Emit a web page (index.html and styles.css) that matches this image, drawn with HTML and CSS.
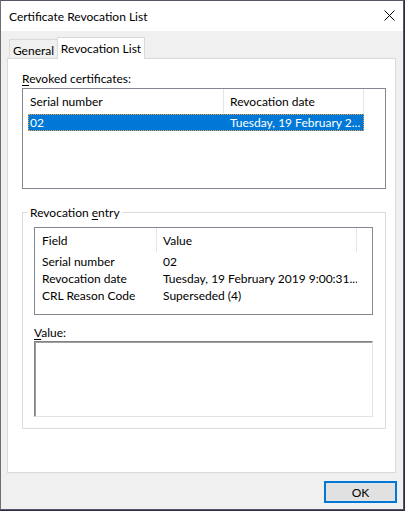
FILE: index.html
```html
<!DOCTYPE html>
<html>
<head>
<meta charset="utf-8">
<title>Certificate Revocation List</title>
<link rel="stylesheet" href="styles.css">
</head>
<body>
<div class="window">
  <div class="titlebar">
    <span class="title">Certificate Revocation List</span>
    <svg class="close" width="11" height="11" viewBox="0 0 11 11"><path d="M0.5 0.5 L10.5 10.5 M10.5 0.5 L0.5 10.5" stroke="#000" stroke-width="1" fill="none"/></svg>
  </div>
  <div class="client">
    <div class="tabs">
      <div class="tab tab-general">General</div>
      <div class="tab tab-active">Revocation List</div>
    </div>
    <div class="panel">
      <div class="label"><u>R</u>evoked certificates:</div>
      <div class="list list-revoked">
        <div class="header">
          <div class="hcell c1">Serial number</div>
          <div class="hcell c2">Revocation date</div>
        </div>
        <div class="row selected">
          <div class="cell r1">02</div>
          <div class="cell r2">Tuesday, 19 February 2...</div>
        </div>
      </div>
      <fieldset class="group">
        <legend>Revocation <u>e</u>ntry</legend>
        <div class="list list-entry">
          <div class="header">
            <div class="hcell e1">Field</div>
            <div class="hcell e2">Value</div>
          </div>
          <div class="row">
            <div class="cell e1">Serial number</div>
            <div class="cell e2">02</div>
          </div>
          <div class="row">
            <div class="cell e1">Revocation date</div>
            <div class="cell e2">Tuesday, 19 February 2019 9:00:31...</div>
          </div>
          <div class="row">
            <div class="cell e1">CRL Reason Code</div>
            <div class="cell e2">Superseded (4)</div>
          </div>
        </div>
        <div class="label value-label"><u>V</u>alue:</div>
        <div class="textbox"></div>
      </fieldset>
    </div>
    <div class="buttons">
      <div class="button">OK</div>
    </div>
  </div>
</div>
</body>
</html>
```
FILE: styles.css
```css
* { box-sizing: border-box; }
html, body { margin: 0; padding: 0; }
body {
  width: 405px;
  height: 511px;
  background: #2e2d40;
  font-family: "Lato", "Noto Sans", sans-serif;
  font-size: 12px;
  color: #000;
  overflow: hidden;
}
u { text-decoration: underline; text-underline-offset: 2px; }

.window {
  width: 404px;
  height: 510px;
  border: 1px solid #55556a;
  border-left-color: #6e6e6e;
  background: #f0f0f0;
  display: flex;
  flex-direction: column;
}
.titlebar {
  height: 30px;
  flex: none;
  background: #fff;
  display: flex;
  align-items: center;
  justify-content: space-between;
  padding: 0 8px 0 8px;
}
.title { line-height: 15px; }
.close { display: block; margin-top: -1px; }

.client {
  flex: 1;
  display: flex;
  flex-direction: column;
  padding: 6px 7px 6px 6px;
}
.tabs {
  display: flex;
  align-items: flex-end;
  height: 22px;
  padding-left: 2px;
  margin-bottom: -1px;
  position: relative;
  z-index: 1;
}
.tab {
  border: 1px solid #d9d9d9;
  border-bottom: none;
  text-align: center;
  line-height: 15px;
  white-space: nowrap;
}
.tab-general {
  width: 48px;
  height: 19px;
  margin-bottom: 1px;
  padding-top: 3px;
  background: #f0f0f0;
  border-right: none;
}
.tab-active {
  width: 88px;
  height: 22px;
  padding-top: 3px;
  background: #fff;
}

.panel {
  height: 415px;
  flex: none;
  background: #fff;
  border: 1px solid #d9d9d9;
  padding: 12px 10px 0 14px;
  display: flex;
  flex-direction: column;
  align-items: flex-start;
}
.label { line-height: 15px; height: 15px; }

.list {
  border: 1px solid #828790;
  background: #fff;
}
.list-revoked {
  margin-top: 2px;
  width: 364px;
  height: 101px;
}
.header { display: flex; height: 25px; }
.hcell {
  height: 100%;
  display: flex;
  align-items: center;
  border-right: 1px solid #e5e5e5;
  line-height: 15px;
  white-space: nowrap;
}
.c1 { width: 201px; padding-left: 7px; }
.c2 { width: 140px; padding-left: 6px; }

.row { display: flex; height: 17px; line-height: 17px; white-space: nowrap; }
.list-revoked .row { margin-left: 5px; width: 336px; }
.selected {
  background: #0078d7;
  color: #fff;
  outline: 1px dotted #f0a040;
  outline-offset: -1px;
}
.r1 { width: 196px; padding-left: 2px; }
.r2 { width: 140px; padding-left: 6px; overflow: hidden; }

.group {
  margin: 16px 0 0 0;
  width: 364px;
  border: 1px solid #dcdcdc;
  padding: 0 11px 11px 11px;
  min-width: 0;
}
.group legend {
  margin-left: -6px;
  padding: 0 2px;
  line-height: 15px;
}
.list-entry {
  margin-top: 7px;
  width: 339px;
  height: 88px;
}
.list-entry .header { height: 24px; margin-bottom: 1px; }
.e1 { width: 122px; padding-left: 7px; }
.e2 { width: 200px; padding-left: 6px; }
.list-entry .row .e2 { overflow: hidden; }

.value-label { margin-top: 10px; }
.textbox {
  margin-top: 1px;
  width: 339px;
  height: 76px;
  background: #fff;
  border: 1px solid;
  border-color: #828282 #e3e3e3 #e3e3e3 #828282;
  box-shadow: inset 1px 1px 0 #a0a0a0;
}

.buttons {
  display: flex;
  justify-content: flex-end;
  margin-top: 8px;
  margin-right: -1px;
}
.button {
  width: 73px;
  height: 22px;
  border: 2px solid #0078d7;
  background: #e1e1e1;
  display: flex;
  align-items: center;
  justify-content: center;
  line-height: 15px;
}
```
